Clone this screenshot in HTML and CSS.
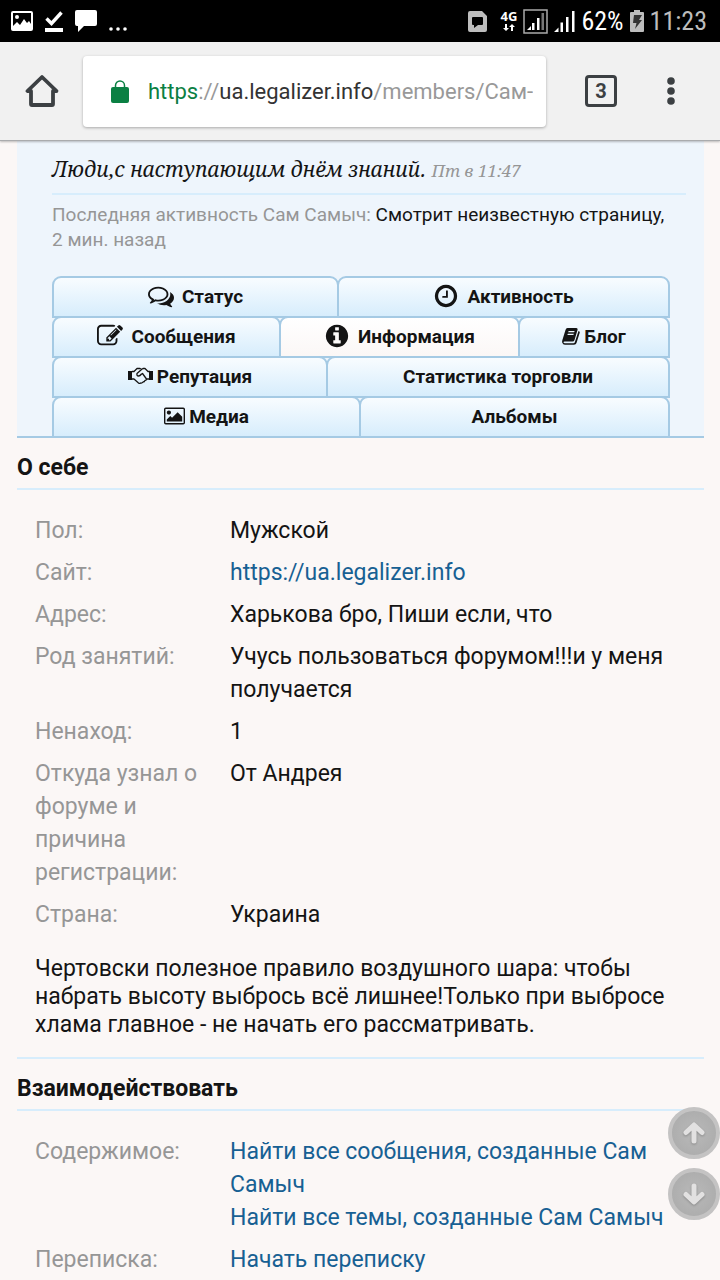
FILE: index.html
```html
<!DOCTYPE html>
<html lang="ru">
<head>
<meta charset="utf-8">
<meta name="viewport" content="width=device-width, initial-scale=1">
<title>Сам Самыч</title>
<link rel="stylesheet" href="styles.css">
</head>
<body>
<div class="statusbar">
  <div class="notices">
    <svg width="22" height="20" viewBox="0 0 22 20"><path fill="#fff" fill-rule="evenodd" d="M2 0h18q2 0 2 2v16q0 2-2 2H2q-2 0-2-2V2q0-2 2-2zM2 2v13l4-4 3 3 4-6 3 4 2-2 2 3V2zM6 4a2 2 0 1 1 0 4 2 2 0 0 1 0-4z"/></svg>
    <svg width="18" height="21" viewBox="0 0 18 21"><path fill="none" stroke="#fff" stroke-width="3.400" d="M1.500 7.500l5 5L16.500 1.500"/><path fill="#fff" d="M0 17h18v4H0z"/></svg>
    <svg width="22" height="22" viewBox="0 0 22 22"><path fill="#fff" d="M2 0h18q2 0 2 2v12q0 2-2 2H9l-6 6v-6H2q-2 0-2-2V2q0-2 2-2z"/></svg>
    <svg class="low" width="18" height="5" viewBox="0 0 18 5"><g fill="#fff"><circle cx="2" cy="2" r="1.800"/><circle cx="9" cy="2" r="1.800"/><circle cx="16" cy="2" r="1.800"/></g></svg>
  </div>
  <div class="system">
    <svg class="sim" width="19" height="21" viewBox="0 0 19 21"><path fill="#bdbdbd" fill-rule="evenodd" d="M2 0h12l5 5v14q0 2-2 2H2q-2 0-2-2V2q0-2 2-2zM5 6q-1 0-1 1v6q0 1 1 1h1v3l4-3h4q1 0 1-1V7q0-1-1-1z"/></svg>
    <div class="net"><span>4G</span><svg width="12" height="7" viewBox="0 0 12 7"><path fill="#fff" d="M2 0h2v4h2L3 7 0 4h2zM8 7h2V3h2L9 0 6 3h2z"/></svg></div>
    <svg width="25" height="25" viewBox="0 0 25 25"><path fill="none" stroke="#aaa" stroke-width="1.500" d="M1 1h23v23H1z"/><path fill="#fff" d="M4 21l4-4v4zM9 14h2.500v7H9zM14 9h2.500v12H14z"/><path fill="#777" d="M18.500 4H21v17h-2.500z"/></svg>
    <svg width="21" height="21" viewBox="0 0 21 21"><path fill="#fff" d="M0 21l4.500-4.500V21zM6.500 11.500H9V21H6.500zM12 6h2.500v15H12zM18 0h2.500v21H18z"/></svg>
    <span class="charge">62%</span>
    <svg width="14" height="22" viewBox="0 0 14 22"><path fill="#bdbdbd" fill-rule="evenodd" d="M4 0h6v2h3q1 0 1 1v18q0 1-1 1H1q-1 0-1-1V3q0-1 1-1h3z"/><path fill="#333" d="M4 5h8l-3 5h3l-7 9 1.500-6H3z"/></svg>
    <span class="clock">11:23</span>
  </div>
</div>
<header class="toolbar">
  <button class="icon-btn" aria-label="Домой"><svg width="34" height="34" viewBox="0 0 34 34"><path fill="none" stroke="#3c4043" stroke-width="3.800" stroke-linejoin="round" d="M17 3L2.500 17H6v13q0 1 1 1h20q1 0 1-1V17h3.500z"/></svg></button>
  <a class="address" href="#">
    <svg width="18" height="23" viewBox="0 0 18 23"><path fill="none" stroke="#0b8043" stroke-width="1.500" d="M4.500 9V5.500a4.500 4.500 0 0 1 9 0V9"/><rect y="7" width="18" height="16" rx="2" fill="#0b8043"/></svg>
    <span class="url"><span class="scheme">https</span>://<span class="host">ua.legalizer.info</span>/members/Сам-</span>
  </a>
  <button class="tabcount" aria-label="Вкладки">3</button>
  <button class="icon-btn more" aria-label="Меню"><svg width="8" height="28" viewBox="0 0 8 28"><g fill="#3c4043"><circle cx="4" cy="4" r="3.800"/><circle cx="4" cy="14" r="3.800"/><circle cx="4" cy="24" r="3.800"/></g></svg></button>
</header>
<main class="page">
  <section class="profile">
    <p class="status-line">Люди,с наступающим днём знаний. <span class="when">Пт в 11:47</span></p>
    <p class="activity">Последняя активность Сам Самыч: <span class="doing">Смотрит неизвестную страницу,</span> 2 мин. назад</p>
    <nav class="tabs">
      <div class="tab-row row-a">
        <a class="tab wide" href="#"><svg width="26" height="26" viewBox="0 0 1792 1792"><path d="M704 384q-153 0-286 52t-211.500 141-78.500 191q0 82 53 158t149 132l97 56-35 84q34-20 62-39l44-31 53 10q78 14 153 14 153 0 286-52t211.500-141 78.500-191-78.500-191-211.500-141-286-52zm0-128q191 0 353.500 68.500t256.500 186.500 94 257-94 257-256.500 186.500-353.500 68.500q-86 0-176-16-124 88-278 128-36 9-86 16h-3q-11 0-20.500-8t-11.500-21q-1-3-1-6.500t.5-6.500 2-6l2.500-5 3.500-5.500 4-5 4.500-5 4-4.500q5-6 23-25t26-29.500 22.500-29 25-38.500 20.500-44q-124-72-195-177t-71-224q0-139 94-257t256.500-186.500 353.500-68.500zm822 1169q10 24 20.500 44t25 38.500 22.500 29 26 29.500 23 25q1 1 4 4.500t4.500 5 4 5 3.500 5.500l2.500 5 2 6 .5 6.500-1 6.500q-3 14-13 22t-22 7q-50-7-86-16-154-40-278-128-90 16-176 16-271 0-472-132 58 4 88 4 161 0 309-45t264-129q125-92 192-212t67-254q0-77-23-152 129 71 204 178t75 230q0 120-71 224.500t-195 176.500z"/></svg>Статус</a>
        <a class="tab wide" href="#"><svg width="26" height="26" viewBox="0 0 1792 1792"><path d="M1024 544v448q0 14-9 23t-23 9h-320q-14 0-23-9t-9-23v-64q0-14 9-23t23-9h224v-352q0-14 9-23t23-9h64q14 0 23 9t9 23zm416 352q0-148-73-273t-198-198-273-73-273 73-198 198-73 273 73 273 198 198 273 73 273-73 198-198 73-273zm224 0q0 209-103 385.500t-279.500 279.500-385.500 103-385.500-103-279.500-279.500-103-385.500 103-385.500 279.500-279.500 385.500-103 385.500 103 279.500 279.500 103 385.500z"/></svg>Активность</a>
      </div>
      <div class="tab-row row-b">
        <a class="tab wide" href="#"><svg width="26" height="26" viewBox="0 0 1792 1792"><path d="M888 1184l116-116-152-152-116 116v56h96v96h56zm440-720q-16-16-33 1l-350 350q-17 17-1 33t33-1l350-350q17-17 1-33zm80 594v190q0 119-84.500 203.500t-203.500 84.500h-832q-119 0-203.500-84.500t-84.500-203.500v-832q0-119 84.500-203.500t203.500-84.500h832q63 0 117 25 15 7 18 23 3 17-9 29l-49 49q-14 14-32 8-23-6-45-6h-832q-66 0-113 47t-47 113v832q0 66 47 113t113 47h832q66 0 113-47t47-113v-126q0-13 9-22l64-64q15-15 35-7t20 29zm-96-738l288 288-672 672h-288v-288zm444 132l-92 92-288-288 92-92q28-28 68-28t68 28l152 152q28 28 28 68t-28 68z"/></svg>Сообщения</a>
        <a class="tab wide active" href="#"><svg width="26" height="26" viewBox="0 0 1792 1792"><path d="M1152 1376v-160q0-14-9-23t-23-9h-96v-512q0-14-9-23t-23-9h-320q-14 0-23 9t-9 23v160q0 14 9 23t23 9h96v320h-96q-14 0-23 9t-9 23v160q0 14 9 23t23 9h448q14 0 23-9t9-23zm-128-896v-160q0-14-9-23t-23-9h-192q-14 0-23 9t-9 23v160q0 14 9 23t23 9h192q14 0 23-9t9-23zm640 416q0 209-103 385.500t-279.500 279.500-385.500 103-385.500-103-279.500-279.500-103-385.500 103-385.500 279.500-279.500 385.500-103 385.500 103 279.500 279.500 103 385.500z"/></svg>Информация</a>
        <a class="tab" href="#"><svg width="18" height="18" viewBox="0 0 18 18"><path fill-rule="evenodd" d="M5.500 1H14q2 0 1.500 2L12.500 13q-.5 1.500-2 1.500H2.500q-1 0-1 .8 0 1 1.500 1H11.500q1 0 1.300-1L16.500 4q1.500.5 1.200 1.700L14.500 16q-.5 1.700-2.500 1.700H3Q.8 17.700.2 15.500q-.3-1 .2-2.500L3.500 3Q4 1 5.500 1zM6.600 4l-.4 1.200h6L12.600 4zM5.800 6.800L5.400 8h6l.4-1.200z"/></svg>Блог</a>
      </div>
      <div class="tab-row row-c">
        <a class="tab" href="#"><svg width="25" height="18" viewBox="0 0 25 18"><path d="M0 4h4v9H0zM21 4h4v9h-4z"/><path fill="none" stroke="#141414" stroke-width="1.300" stroke-linejoin="round" d="M4 4.500h2l3-3h3l1.500 1 1.500-1h2l3 3h2M4 12h2l4.500 4q1 .8 2 0 1.500.5 2.500-1 1.500 0 2-1.500 1.500 0 1.500-1.500H21M13.500 2.500L9 6.500q-.5 2.500 1.500 2.500 1.500 0 3-2l1-.5 4 5.500"/></svg>Репутация</a>
        <a class="tab" href="#">Статистика торговли</a>
      </div>
      <div class="tab-row row-d">
        <a class="tab" href="#"><svg width="21" height="18" viewBox="-64 96 1920 1600"><path fill-rule="evenodd" d="M576 576q0 80-56 136t-136 56-136-56-56-136 56-136 136-56 136 56 56 136zm1024 384v448h-1408v-192l320-320 160 160 512-512zM96 256q-32 0-32 32v1216q0 32 32 32h1600q32 0 32-32V288q0-32-32-32zM96 128h1600q160 0 160 160v1216q0 160-160 160H96q-160 0-160-160V288q0-160 160-160z"/></svg>Медиа</a>
        <a class="tab" href="#">Альбомы</a>
      </div>
    </nav>
  </section>
  <section class="block">
    <h2 class="heading">О себе</h2>
    <dl class="facts">
      <dt>Пол:</dt><dd>Мужской</dd>
      <dt>Сайт:</dt><dd><a href="#">https://ua.legalizer.info</a></dd>
      <dt>Адрес:</dt><dd>Харькова бро, Пиши если, что</dd>
      <dt>Род занятий:</dt><dd>Учусь пользоваться форумом!!!и у меня получается</dd>
      <dt>Ненаход:</dt><dd>1</dd>
      <dt>Откуда узнал о форуме и причина регистрации:</dt><dd>От Андрея</dd>
      <dt>Страна:</dt><dd>Украина</dd>
    </dl>
    <p class="about">Чертовски полезное правило воздушного шара: чтобы набрать высоту выбрось всё лишнее!Только при выбросе хлама главное - не начать его рассматривать.</p>
  </section>
  <section class="block ruled">
    <h2 class="heading">Взаимодействовать</h2>
    <dl class="facts">
      <dt>Содержимое:</dt><dd><a href="#">Найти все сообщения, созданные Сам Самыч</a><br><a href="#">Найти все темы, созданные Сам Самыч</a></dd>
      <dt>Переписка:</dt><dd><a href="#">Начать переписку</a></dd>
    </dl>
  </section>
</main>
<div class="scrollers">
  <button class="scroll" aria-label="Наверх"><svg width="22" height="22" viewBox="0 0 22 22"><path d="M11 19V4M3 10.500L11 3l8 7.500"/></svg></button>
  <button class="scroll" aria-label="Вниз"><svg width="22" height="22" viewBox="0 0 22 22"><path d="M11 3v15M3 11.500L11 19l8-7.500"/></svg></button>
</div>
</body>
</html>
```
FILE: styles.css
```css
* { box-sizing: border-box; }
body {
  margin: 0;
  background: #fbf7f6;
  color: #141414;
  font: 23px/33px Roboto, "Noto Sans", sans-serif;
}
p, h2, dl, dd { margin: 0; }
a { color: #176093; text-decoration: none; }
button { border: 0; padding: 0; background: none; font: inherit; }
svg { display: block; flex: none; }

.statusbar {
  display: flex;
  justify-content: space-between;
  align-items: center;
  height: 42px;
  padding: 0 13px 0 11px;
  background: #000;
  color: #fff;
}
.notices { display: flex; align-items: center; gap: 12px; }
.low { align-self: flex-end; }
.system { display: flex; align-items: center; gap: 6px; }
.sim { margin-right: 8px; }
.net { display: flex; flex-direction: column; align-items: center; gap: 2px; font: bold 13px/11px "Open Sans", sans-serif; }
.charge, .clock { font: 26px/42px "Roboto Condensed", Roboto, sans-serif; }
.clock { color: #bdbdbd; }

.toolbar {
  position: relative;
  display: flex;
  align-items: center;
  height: 99px;
  padding: 0 45px 0 25px;
  background: #f1f1f1;
  border-bottom: 1px solid #aaabad;
  box-shadow: 0 1px 2px rgba(0, 0, 0, .25);
}
.address {
  display: flex;
  flex: 1;
  align-items: center;
  gap: 19px;
  min-width: 0;
  height: 71px;
  margin: 0 39px 0 24px;
  padding: 0 12px 0 28px;
  background: #fff;
  border-radius: 4px;
  box-shadow: 0 1px 3px rgba(0, 0, 0, .3);
  color: #999;
  font-size: 22px;
}
.url { overflow: hidden; white-space: nowrap; }
.scheme { color: #0b8043; }
.host { color: #333; }
.tabcount {
  width: 32px;
  height: 32px;
  border: 3px solid #3c4043;
  border-radius: 4px;
  color: #3c4043;
  font: bold 20px/26px Roboto, sans-serif;
}
.more { margin-left: 50px; }

.page { padding: 0 16px 0 17px; }
.profile {
  padding: 12px 18px 0 35px;
  background: #eef5fc;
  border-bottom: 2px solid #a5cae4;
}
.status-line {
  padding-bottom: 6px;
  border-bottom: 2px solid #d7edfc;
  font: italic 21px/33px "Noto Serif", "Droid Serif", "Liberation Serif", serif;
}
.when { color: #969696; font-size: 17px; }
.activity { padding: 7px 16px 24px 0; color: #969696; font-size: 19px; line-height: 25px; }
.doing { color: #141414; }

.tabs { margin: 0 16px -2px 0; }
.tab-row { display: grid; margin-bottom: -2px; }
.tab-row:last-child { margin-bottom: 0; }
.row-a { grid-template-columns: 287fr 331fr; }
.row-b { grid-template-columns: 229fr 239fr 150fr; }
.row-c { grid-template-columns: 276fr 342fr; }
.row-d { grid-template-columns: 309fr 309fr; }
.tab {
  display: flex;
  align-items: center;
  justify-content: center;
  gap: 4px;
  height: 42px;
  padding-bottom: 2px;
  border: 2px solid #a5cae4;
  border-radius: 9px 9px 0 0;
  background: linear-gradient(#f8fcff, #d7edfc);
  color: #141414;
  font-weight: bold;
  font-size: 19px;
  line-height: 25px;
}
.tab + .tab { margin-left: -2px; }
.tab.wide { gap: 8px; }
.tab.active { background: linear-gradient(#fff, #fbf7f6); }
.tab svg { fill: #141414; }

.ruled { border-top: 2px solid #d7edfc; }
.heading {
  padding: 13px 0 4px;
  border-bottom: 2px solid #d7edfc;
  font-size: 23px;
  line-height: 33px;
}
.facts {
  display: grid;
  grid-template-columns: 165px 1fr;
  gap: 9px 30px;
  padding: 24px 18px 0;
}
.facts dt { color: #969696; }
.about { padding: 24px 18px 18px; line-height: 28px; }

.scrollers {
  position: fixed;
  right: 0;
  bottom: 60px;
  display: grid;
  gap: 9px;
}
.scroll {
  display: grid;
  place-items: center;
  width: 52px;
  height: 52px;
  border: 4px solid #c4c3c3;
  border-radius: 50%;
  background: radial-gradient(#b9b9b9, #a9a9a9);
}
.scroll svg {
  fill: none;
  stroke: #e2e1e1;
  stroke-width: 5;
  stroke-linecap: round;
  stroke-linejoin: round;
  filter: drop-shadow(0 1px 1px #888);
}
```
